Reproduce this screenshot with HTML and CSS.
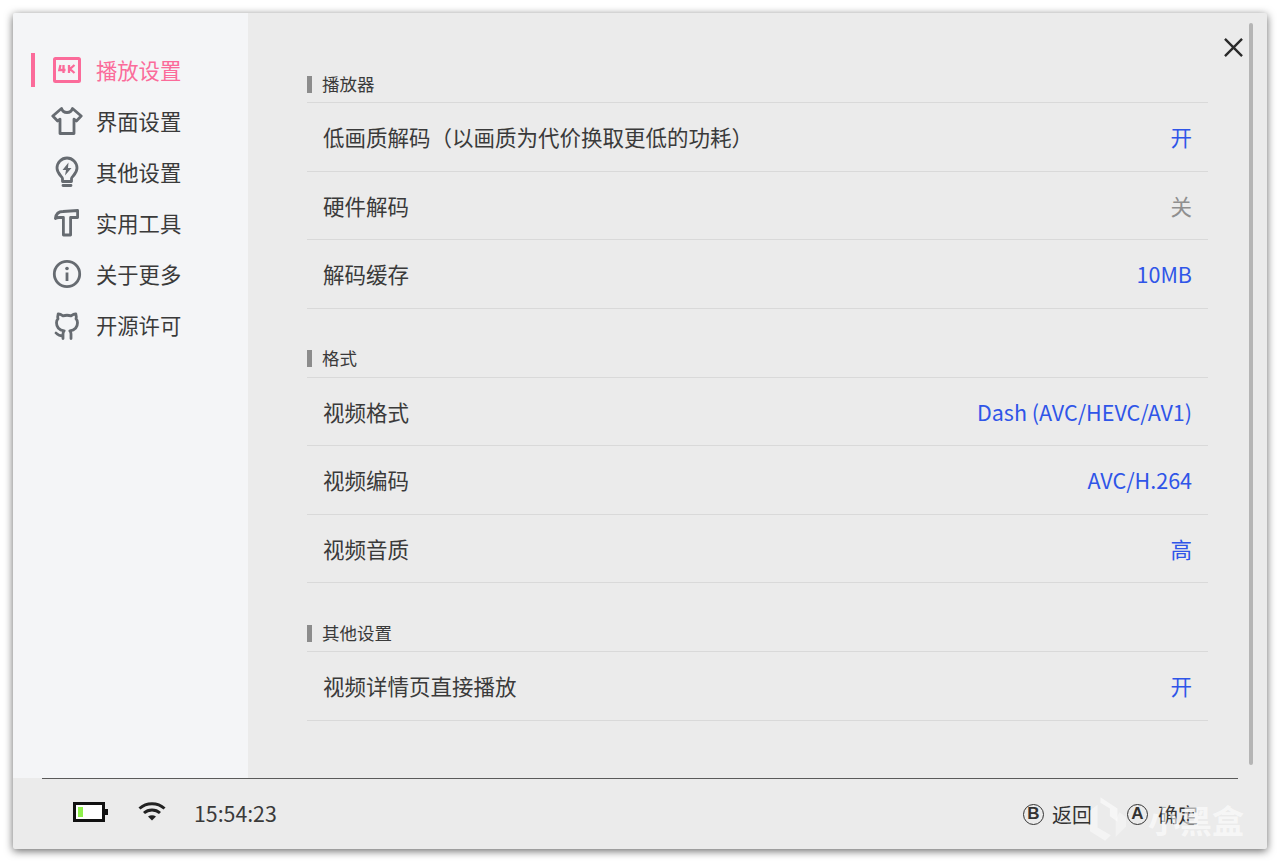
FILE: index.html
```html
<!DOCTYPE html>
<html lang="zh-CN">
<head>
<meta charset="utf-8">
<title>设置</title>
<link rel="stylesheet" href="styles.css">
</head>
<body>
<div class="window">
  <div class="main">
    <nav class="sidebar">
      <div class="nav-item active">
        <svg class="nav-icon" viewBox="0 0 32 32"><rect x="3.500" y="4.500" width="25" height="23" rx="1" fill="none" stroke="currentColor" stroke-width="3"/><path d="M12.500 11v8M9.500 11l-1.200 5H14.500M18 11v8M23.500 11l-4.500 4 4.500 4" fill="none" stroke="currentColor" stroke-width="2.300"/></svg>
        <span>播放设置</span>
      </div>
      <div class="nav-item">
        <svg class="nav-icon" viewBox="0 0 32 32"><path d="M10.500 3.500 1.800 11l4.800 5 2.400-1.800V28.500h14V14.200l2.400 1.800 4.800-5-8.700-7.500c-.8 2.600-3 4-5.500 4s-4.700-1.400-5.500-4z" fill="none" stroke="currentColor" stroke-width="2.800" stroke-linejoin="round"/></svg>
        <span>界面设置</span>
      </div>
      <div class="nav-item">
        <svg class="nav-icon" viewBox="0 0 32 32"><path d="M11.500 25.500v-3c0-2-5.500-4.500-5.500-10.500a10 10 0 0 1 20 0c0 6-5.500 8.500-5.500 10.500v3zM12 29.500h8" fill="none" stroke="currentColor" stroke-width="2.800" stroke-linejoin="round" stroke-linecap="round"/><path d="M17.500 6.500 11.500 14h3.500l-1 5.500 6.500-7.500H17z" fill="currentColor"/></svg>
        <span>其他设置</span>
      </div>
      <div class="nav-item">
        <svg class="nav-icon" viewBox="0 0 32 32"><path d="M4.400 11.500C5 6.500 8.500 4.500 12 4.500l14.600-1v7H19.600V28H12.400V10.500H8c-1.500 0-3 .3-3.600 1z" fill="none" stroke="currentColor" stroke-width="2.800" stroke-linejoin="round"/></svg>
        <span>实用工具</span>
      </div>
      <div class="nav-item">
        <svg class="nav-icon" viewBox="0 0 32 32"><circle cx="16" cy="16" r="12.700" fill="none" stroke="currentColor" stroke-width="2.800"/><circle cx="16" cy="10.500" r="1.800" fill="currentColor"/><path d="M16 14.500v8.500" stroke="currentColor" stroke-width="2.800"/></svg>
        <span>关于更多</span>
      </div>
      <div class="nav-item">
        <svg class="nav-icon" viewBox="0 0 32 32"><path d="M12 29.500v-4.500c0-1.500.5-2.500 1.200-3.200-4.500-.5-7.700-2.500-7.700-8 0-1.500.5-3 1.500-4-.2-.7-.5-2.500.2-5 0 0 1.800-.2 4.800 2a15 15 0 0 1 8 0c3-2.200 4.800-2 4.800-2 .7 2.500.4 4.300.2 5 1 1 1.500 2.500 1.500 4 0 5.500-3.200 7.500-7.700 8 .7.700 1.200 1.700 1.200 3.200v4.500M12 26.500c-4 1.200-5-1-7-2.500" fill="none" stroke="currentColor" stroke-width="2.800" stroke-linejoin="round" stroke-linecap="round"/></svg>
        <span>开源许可</span>
      </div>
    </nav>
    <section class="content">
      <svg class="close" viewBox="0 0 20 20"><path d="M1 1l18 18M19 1 1 19" stroke="currentColor" stroke-width="2.500" fill="none"/></svg>
      <div class="scrollbar"></div>
      <div class="group">
        <h2 class="group-title">播放器</h2>
        <div class="row"><span>低画质解码（以画质为代价换取更低的功耗）</span><span class="val">开</span></div>
        <div class="row"><span>硬件解码</span><span class="val off">关</span></div>
        <div class="row"><span>解码缓存</span><span class="val">10MB</span></div>
      </div>
      <div class="group">
        <h2 class="group-title">格式</h2>
        <div class="row"><span>视频格式</span><span class="val">Dash (AVC/HEVC/AV1)</span></div>
        <div class="row"><span>视频编码</span><span class="val">AVC/H.264</span></div>
        <div class="row"><span>视频音质</span><span class="val">高</span></div>
      </div>
      <div class="group">
        <h2 class="group-title">其他设置</h2>
        <div class="row"><span>视频详情页直接播放</span><span class="val">开</span></div>
      </div>
    </section>
  </div>
  <footer class="footer">
    <div class="status">
      <div class="battery"><div class="battery-level"></div></div>
      <svg class="wifi" viewBox="0 0 28 20"><path d="M1.500 7.500C8.500 1 19.500 1 26.500 7.500M6 12c4.500-4 11.500-4 16 0" fill="none" stroke="currentColor" stroke-width="3"/><path d="M10 15.500c2.500-1.700 5.500-1.700 8 0L14 19.500z" fill="currentColor"/></svg>
      <span class="clock">15:54:23</span>
    </div>
    <div class="hints">
      <span class="hint"><span class="key">B</span>返回</span>
      <span class="hint hint-confirm"><span class="key">A</span>确定</span>
    </div>
    <div class="watermark">
      <svg class="wm-logo" viewBox="0 0 40 50"><path d="M12 2 30 14v14l-8-6V14l-10-6z" fill="#fff" fill-opacity=".55"/><path d="M1 16l8-6v24l14 8-6 6L1 38z" fill="#fff" fill-opacity=".45"/><path d="M32 18l7 5v10L28 44V26z" fill="#fff" fill-opacity=".35"/></svg>
      <span class="wm-text">小黑盒</span>
    </div>
  </footer>
</div>
</body>
</html>
```

FILE: styles.css
```css
* { box-sizing: border-box; }
html, body { margin: 0; height: 100%; background: #fff; }
body {
  padding: 13px;
  font-family: "Noto Sans CJK SC", "Noto Sans", sans-serif;
  color: #333;
  overflow: hidden;
}
.window {
  width: 1254px;
  height: 836px;
  background: #ebebeb;
  box-shadow: 0 2px 9px rgba(0,0,0,.6);
  border-radius: 2px;
  display: flex;
  flex-direction: column;
  overflow: hidden;
}
.main { height: 765px; display: flex; flex: none; }
.sidebar {
  width: 235px;
  background: #f4f5f7;
  padding-top: 31px;
  display: flex;
  flex-direction: column;
  flex: none;
}
.nav-item {
  position: relative;
  height: 51px;
  padding-left: 38px;
  display: flex;
  align-items: center;
  gap: 13px;
  font-size: 21.3px;
  color: #3a3a3a;
}
.nav-item span { line-height: 1; }
.nav-icon { width: 32px; height: 32px; color: #666b71; flex: none; }
.nav-item.active { color: #fb6b9a; }
.nav-item.active .nav-icon { color: #fb6b9a; }
.nav-item.active::before {
  content: "";
  position: absolute;
  left: 18px;
  top: 9px;
  width: 4px;
  height: 34px;
  background: #fb6b9a;
}
.content {
  position: relative;
  flex: 1;
  padding: 60.5px 59px 0 59px;
}
.close {
  position: absolute;
  left: 975.500px;
  top: 25px;
  width: 19px;
  height: 19px;
  color: #2b2b2b;
}
.scrollbar {
  position: absolute;
  right: 14px;
  top: 10px;
  width: 4px;
  height: 742px;
  background: #b5b5b5;
  border-radius: 2px;
}
.group { margin-bottom: 39.500px; }
.group-title {
  margin: 0;
  height: 28.500px;
  position: relative;
  padding-left: 15px;
  font-size: 17.5px;
  font-weight: 400;
  line-height: 20px;
  color: #3a3a3a;
  display: flex;
  align-items: flex-start;
}
.group-title::before {
  content: "";
  position: absolute;
  left: 0;
  top: 2px;
  width: 5px;
  height: 17px;
  background: #8c8c8c;
}
.row {
  height: 68.5px;
  border-top: 1px solid #d9d9d9;
  padding: 0 16px;
  display: flex;
  align-items: center;
  justify-content: space-between;
  font-size: 21.5px;
  color: #3a3a3a;
}
.row:last-child { border-bottom: 1px solid #d9d9d9; height: 69.5px; }
.val { color: #2f55e8; }
.val.off { color: #8f8f8f; }
.footer {
  position: relative;
  flex: 1;
  margin: 0 29px;
  border-top: 1px solid #5a5a5a;
  display: flex;
  align-items: center;
  justify-content: space-between;
  padding: 0 0 0 31px;
}
.status { display: flex; align-items: center; margin-bottom: 3px; }
.battery {
  position: relative;
  width: 32px;
  height: 20px;
  border: 3px solid #111;
  background: #fff;
  margin: 0 33px 1px 0;
  padding: 2px;
}
.battery::after {
  content: "";
  position: absolute;
  right: -6px;
  top: 4px;
  width: 3px;
  height: 6px;
  background: #111;
}
.battery-level { width: 5px; height: 100%; background: #8ff04c; }
.wifi { width: 28px; height: 20px; color: #222; margin-right: 28px; position: relative; top: -2px; }
.clock { font-size: 21.3px; color: #3a3a3a; }
.hints { display: flex; gap: 35px; margin-right: 40px; }
.hint { display: flex; align-items: center; gap: 8px; font-size: 20px; color: #333; }
.hint-confirm { gap: 10px; }
.key {
  width: 21px;
  height: 21px;
  border: 1.300px solid #333;
  border-radius: 50%;
  font-family: "Liberation Sans", sans-serif;
  font-size: 17px;
  font-weight: 700;
  display: flex;
  align-items: center;
  justify-content: center;
}
.watermark {
  position: absolute;
  right: -6px;
  top: 16px;
  display: flex;
  align-items: center;
  gap: 21px;
  pointer-events: none;
}
.wm-logo { width: 38px; height: 48px; }
.wm-text {
  font-size: 32px;
  font-weight: 700;
  color: rgba(255,255,255,.62);
  line-height: 1;
}
```
